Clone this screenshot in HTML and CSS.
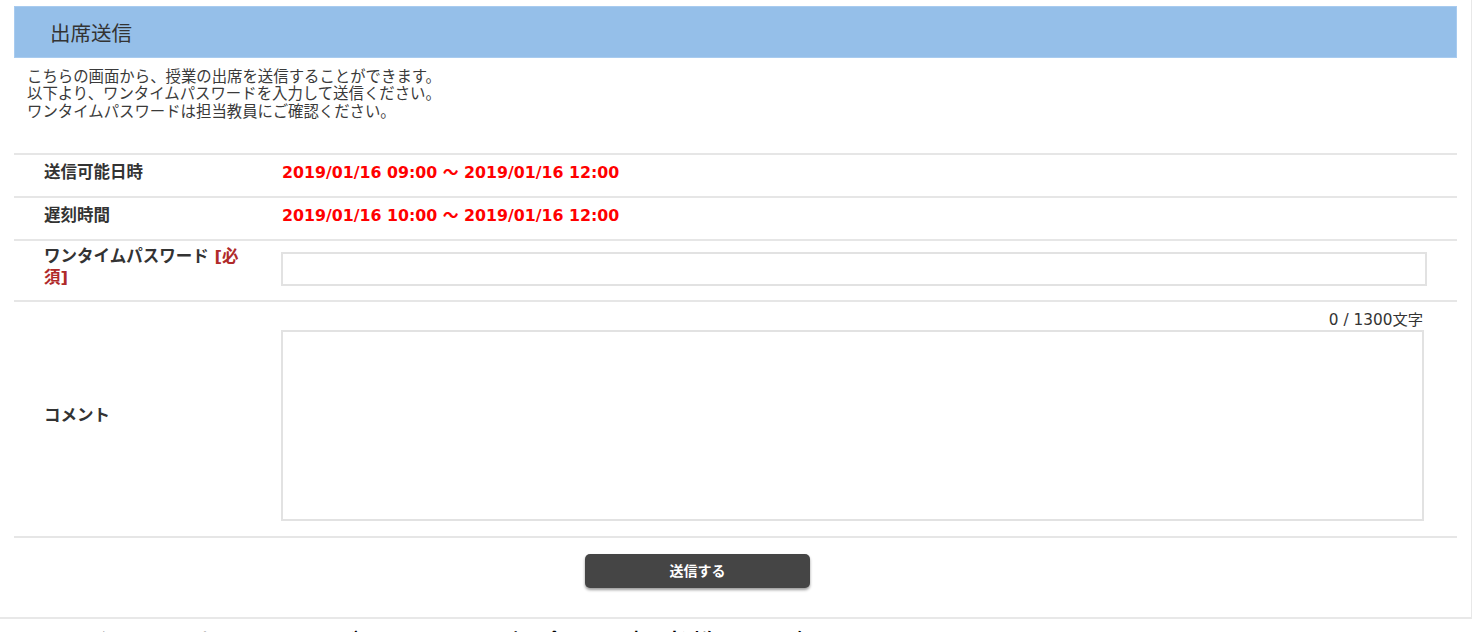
FILE: index.html
```html
<!DOCTYPE html>
<html lang="ja">
<head>
<meta charset="utf-8">
<title>出席送信</title>
<link rel="stylesheet" href="styles.css">
</head>
<body>
<div class="frame">
  <div class="panel">
    <div class="header"><h1 class="title">出席送信</h1></div>
    <div class="desc">
      <p>こちらの画面から、授業の出席を送信することができます。</p>
      <p>以下より、ワンタイムパスワードを入力して送信ください。</p>
      <p>ワンタイムパスワードは担当教員にご確認ください。</p>
    </div>
    <div class="row row-period">
      <div class="label">送信可能日時</div>
      <div class="value red">2019/01/16 09:00 ～ 2019/01/16 12:00</div>
    </div>
    <div class="row row-period">
      <div class="label">遅刻時間</div>
      <div class="value red">2019/01/16 10:00 ～ 2019/01/16 12:00</div>
    </div>
    <div class="row row-pass">
      <div class="label">ワンタイムパスワード <span class="req">[必須]</span></div>
      <div class="value value-input"><input class="text-input" type="text"></div>
    </div>
    <div class="row row-comment">
      <div class="label label-comment">コメント</div>
      <div class="value value-comment">
        <div class="counter">0 / 1300文字</div>
        <textarea class="textarea"></textarea>
      </div>
    </div>
    <div class="actions"><button class="submit" type="button">送信する</button></div>
  </div>
</div>
<p class="note">ワンタイムパスワードがわからない場合は、担当教員に確認してください。</p>
</body>
</html>
```

FILE: styles.css
```css
html, body {
  margin: 0;
  padding: 0;
  background: #ffffff;
}

body {
  font-family: "DejaVu Sans", "Noto Sans CJK JP", sans-serif;
  color: #333333;
  overflow: hidden;
}

.frame {
  box-sizing: border-box;
  width: 1472px;
  padding: 6px 0 0 14px;
  border-right: 1px solid #e8e8e8;
  border-bottom: 2px solid #e8e8e8;
}

.panel {
  width: 1443px;
}

.header {
  box-sizing: border-box;
  height: 52px;
  background: #95bfe9;
  border: 1px solid #a8cbef;
  padding-left: 35px;
  display: flex;
  align-items: center;
}

.title {
  margin: 0;
  font-family: "Noto Sans CJK JP", sans-serif;
  font-size: 20.5px;
  font-weight: normal;
  color: #333333;
  line-height: 24px;
}

.desc {
  padding: 11px 13px 32px;
  font-size: 15.4px;
  line-height: 17.3px;
  color: #3a3a3a;
}

.desc p {
  margin: 0;
}

.row {
  display: grid;
  grid-template-columns: 267px 1fr;
  border-top: 2px solid #e6e6e6;
}

.label {
  box-sizing: border-box;
  padding: 0 34px 0 30px;
  font-size: 16.5px;
  font-weight: bold;
  line-height: 20px;
  color: #333333;
}

.value {
  min-width: 0;
}

.red {
  color: #ff0000;
  font-weight: bold;
  font-size: 15.8px;
  line-height: 20px;
  padding-left: 1px;
}

.row-period {
  padding: 8px 0 13px;
}

.req {
  color: #b02a2a;
}

.row-pass .label {
  padding-top: 5px;
  line-height: 21px;
}

.value-input {
  padding: 11px 0 14px;
}

.text-input {
  display: block;
  box-sizing: border-box;
  width: 1146px;
  height: 34px;
  margin: 0;
  border: 2px solid #e2e2e2;
  background: #ffffff;
  outline: none;
}

.row-comment {
  align-items: center;
}

.label-comment {
  padding-bottom: 6px;
}

.value-comment {
  padding: 8px 0 15px;
  width: 1143px;
}

.counter {
  text-align: right;
  font-size: 15.3px;
  line-height: 20px;
  color: #333333;
  padding-right: 1px;
}

.textarea {
  display: block;
  box-sizing: border-box;
  width: 1143px;
  height: 191px;
  margin: 0;
  border: 2px solid #e2e2e2;
  resize: none;
  outline: none;
}

.actions {
  border-top: 2px solid #e6e6e6;
  display: flex;
  justify-content: center;
  padding: 16px 76px 29px 0;
}

.submit {
  width: 225px;
  height: 34px;
  padding: 0 0 2px;
  border: none;
  border-radius: 5px;
  background: #454545;
  color: #ffffff;
  font-family: "Noto Sans CJK JP", sans-serif;
  font-size: 14px;
  font-weight: bold;
  box-shadow: 0 2px 3px rgba(0, 0, 0, 0.4);
  cursor: pointer;
}

.note {
  margin: 0;
  padding: 9px 0 0 30px;
  font-family: "Liberation Serif", "Noto Sans CJK JP", serif;
  font-size: 30px;
  line-height: 36px;
  color: #000000;
  white-space: nowrap;
}
```
